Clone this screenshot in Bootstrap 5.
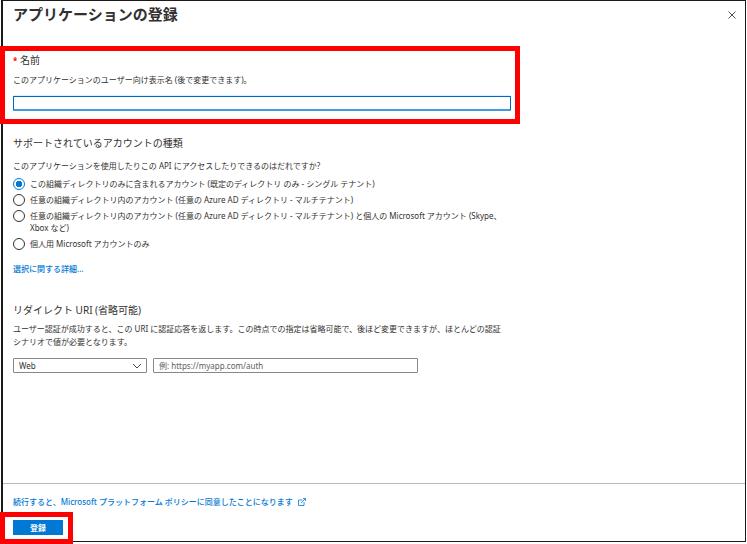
<!DOCTYPE html>
<html lang="ja">
<head>
<meta charset="utf-8">
<meta name="viewport" content="width=device-width, initial-scale=1">
<title>アプリケーションの登録</title>
<link href="https://cdn.jsdelivr.net/npm/bootstrap@5.3.0/dist/css/bootstrap.min.css" rel="stylesheet">
<style>
  body { font-family: "Noto Sans", "Noto Sans CJK JP", sans-serif; font-size: 8px; line-height: 12px; color: #323130; background: #fff; padding: 0 1px 2px; }
  .blade { border: 1px solid #1b1a19; border-left-width: 2px; }
  .blade-head { padding: 3px 10px 0; height: 45px; }
  .blade-title { font-size: 15px; line-height: 20px; font-weight: 700; }
  .close-btn { width: 8px; height: 8px; margin-top: 7px; margin-right: -1px; }
  .close-btn svg, .ext-icon { display: block; width: 8px; height: 8px; fill: none; stroke: currentColor; stroke-width: .8; }
  .form-col { max-width: 518px; padding: 0 10px; }
  .section-title { font-size: 10px; line-height: 16px; font-weight: 400; margin: 0; }
  .required-mark { color: #f00; font-size: 8px; font-weight: 700; }
  .name-block { padding: 6px 0 13px; margin-bottom: 11px; }
  .name-help { margin: 5px 0 10px; }
  .callout { position: absolute; border: 5px solid #f00; pointer-events: none; }
  .callout-name { inset: 0 -9px 0 -13px; }
  .callout-submit { inset: -8px -10px -9px -13px; }
  .field { height: 15px; padding: 0 5px; border: 1px solid #8a8886; border-radius: 1px; font-size: 8px; line-height: 13px; color: #323130; }
  .field::placeholder { color: #605e5c; opacity: 1; }
  .field:focus { box-shadow: none; }
  .name-field, .name-field:focus { border-color: #0067c5; border-bottom: 2px solid #4699dc; box-shadow: 0 -1px #dcedfa; }
  .type-select { width: 134px; background-size: 10px 10px; background-position: right 4px center; background-image: url("data:image/svg+xml,%3Csvg xmlns='http://www.w3.org/2000/svg' viewBox='0 0 10 10'%3E%3Cpath d='M1 3l4 4 4-4' fill='none' stroke='%23323130' stroke-width='.9'/%3E%3C/svg%3E"); }
  .uri-field { max-width: 265px; }
  .uri-row { gap: 6px; }
  .question { margin: 9px 0 6px; }
  .account-list { gap: 4px; margin-bottom: 13px; }
  .account-list .form-check { min-height: 12px; padding: 0; margin: 0; gap: 5px; }
  .account-list .form-check-input { float: none; flex: none; width: 12px; height: 12px; margin: 0; border: 1px solid #323130; }
  .account-list .form-check-input:checked { border-color: #0078d4; background-color: #fff; background-image: radial-gradient(circle, #0078d4 0 3px, transparent 3px); }
  .azure-link { color: #0078d4; text-decoration: none; font-weight: 500; }
  .redirect { margin-top: 27px; }
  .redirect-text { margin: 4px 0 10px; max-width: 494px; line-height: 13px; }
  .blade-foot { border-top: 1px solid #bcbcbc; padding: 12px 10px 6px; }
  .policy-link { gap: 5px; margin-bottom: 12px; }
  .submit-wrap { width: fit-content; }
  .submit-btn { width: 50px; height: 15px; padding: 0; border: 0; border-radius: 0; background: #0078d4; color: #fff; font-size: 8px; line-height: 14px; font-weight: 700; }
</style>
</head>
<body class="min-vh-100 d-flex flex-column">
<div class="blade flex-grow-1 d-flex flex-column">
  <header class="blade-head d-flex justify-content-between align-items-start">
    <h1 class="blade-title m-0">アプリケーションの登録</h1>
    <button type="button" class="close-btn btn p-0 border-0" aria-label="閉じる">
      <svg viewBox="0 0 8 8" aria-hidden="true"><path d="M.5.5l7 7M7.5.5l-7 7"/></svg>
    </button>
  </header>

  <main class="form-col flex-grow-1">
    <section class="name-block position-relative">
      <label class="section-title d-block" for="appName"><span class="required-mark">*</span> 名前</label>
      <p class="name-help" id="nameHelp">このアプリケーションのユーザー向け表示名 (後で変更できます)。</p>
      <input type="text" id="appName" class="field name-field form-control" aria-describedby="nameHelp">
      <div class="callout callout-name"></div>
    </section>

    <section>
      <h2 class="section-title">サポートされているアカウントの種類</h2>
      <p class="question" id="acctQ">このアプリケーションを使用したりこの API にアクセスしたりできるのはだれですか?</p>
      <div class="account-list d-flex flex-column" role="radiogroup" aria-labelledby="acctQ">
        <div class="form-check d-flex">
          <input class="form-check-input" type="radio" name="acct" id="acct1" checked>
          <label for="acct1">この組織ディレクトリのみに含まれるアカウント (既定のディレクトリ のみ - シングル テナント)</label>
        </div>
        <div class="form-check d-flex">
          <input class="form-check-input" type="radio" name="acct" id="acct2">
          <label for="acct2">任意の組織ディレクトリ内のアカウント (任意の Azure AD ディレクトリ - マルチテナント)</label>
        </div>
        <div class="form-check d-flex">
          <input class="form-check-input" type="radio" name="acct" id="acct3">
          <label for="acct3">任意の組織ディレクトリ内のアカウント (任意の Azure AD ディレクトリ - マルチテナント) と個人の Microsoft アカウント (Skype、Xbox など)</label>
        </div>
        <div class="form-check d-flex">
          <input class="form-check-input" type="radio" name="acct" id="acct4">
          <label for="acct4">個人用 Microsoft アカウントのみ</label>
        </div>
      </div>
      <a class="azure-link d-table" href="#">選択に関する詳細...</a>
    </section>

    <section class="redirect">
      <h2 class="section-title">リダイレクト URI (省略可能)</h2>
      <p class="redirect-text" id="uriHelp">ユーザー認証が成功すると、この URI に認証応答を返します。この時点での指定は省略可能で、後ほど変更できますが、ほとんどの認証シナリオで値が必要となります。</p>
      <div class="uri-row d-flex">
        <select class="field type-select form-select flex-shrink-0" aria-label="プラットフォーム"><option>Web</option></select>
        <input type="url" class="field uri-field form-control" placeholder="例: https://myapp.com/auth" aria-label="リダイレクト URI" aria-describedby="uriHelp">
      </div>
    </section>
  </main>

  <footer class="blade-foot">
    <a class="azure-link policy-link d-flex align-items-center" href="#">続行すると、Microsoft プラットフォーム ポリシーに同意したことになります
      <svg class="ext-icon" viewBox="0 0 8 8" aria-hidden="true"><path d="M4.500 2H.5v5.500H6V4M3 5l4.500-4.500M5 .5h2.500V3"/></svg>
    </a>
    <div class="submit-wrap position-relative">
      <button type="submit" class="submit-btn btn d-block">登録</button>
      <div class="callout callout-submit"></div>
    </div>
  </footer>
</div>
<script src="https://cdn.jsdelivr.net/npm/bootstrap@5.3.0/dist/js/bootstrap.bundle.min.js"></script>
</body>
</html>
